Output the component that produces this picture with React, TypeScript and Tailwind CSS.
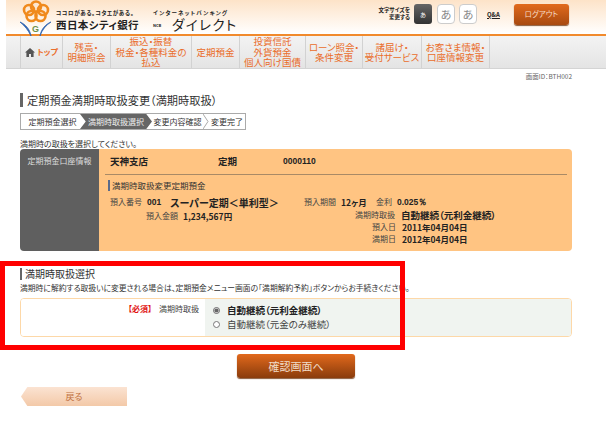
const navItems = [
  { w: 'w-[48px]', lines: ['残高・', '明細照会'] },
  { w: 'w-[81px]', lines: ['振込・振替', '税金・各種料金の', '払込'] },
  { w: 'w-[48px]', lines: ['定期預金'] },
  { w: 'w-[66px]', lines: ['投資信託', '外貨預金', '個人向け国債'] },
  { w: 'w-[57px]', lines: ['ローン照会・', '条件変更'] },
  { w: 'w-[59px]', lines: ['諸届け・', '受付サービス'] },
  { w: 'w-[68px]', lines: ['お客さま情報・', '口座情報変更'] },
];

function Logo() {
  return (
    <svg width="32" height="36" viewBox="0 0 32 36" className="shrink-0">
      <g fill="none" stroke="#f08a1d" strokeWidth="2.6">
        <circle cx="16" cy="6.5" r="5" />
        <circle cx="9" cy="10" r="5" />
        <circle cx="23" cy="10" r="5" />
        <circle cx="11.5" cy="16" r="5" />
        <circle cx="20.5" cy="16" r="5" />
      </g>
      <path d="M0 22 C5 24 10 29 11 36 C8 30 5 26 0 22Z" fill="#2f63b0" stroke="#2f63b0" strokeWidth="0.8" />
      <path d="M31 22 C26 24 21 29 20 36 C22 30 26 25 31 22Z" fill="#2f63b0" stroke="#2f63b0" strokeWidth="0.8" />
      <text x="12" y="32" fontSize="9" fontWeight="700" fill="#6f8f4a" fontFamily="Liberation Sans, sans-serif">G</text>
    </svg>
  );
}

function Field({ label, className, children }: { label: string; className: string; children: React.ReactNode }) {
  return (
    <div className={`flex items-center ${className}`}>
      <span className="text-[8px] font-normal text-[#444]">{label}</span>
      {children}
    </div>
  );
}

export default function App() {
  return (
    <div className="relative w-[606px] h-[425px] overflow-hidden bg-white text-[#222] font-['Noto_Sans_CJK_JP','Noto_Sans',sans-serif] [font-feature-settings:'palt']">
      {/* header */}
      <header className="ml-[6px] h-[34px] flex bg-gradient-to-b from-[#fde3c8] to-white">
        <div className="ml-[14px] flex items-start">
          <Logo />
          <div className="ml-[4px] pt-[10px] w-[88px]">
            <div className="text-[5.5px] leading-[6px] font-bold tracking-[0.6px] whitespace-nowrap">ココロがある。コタエがある。</div>
            <div className="text-[10.5px] leading-[13px] mt-[2px] font-bold tracking-[0.4px] whitespace-nowrap">西日本シティ銀行</div>
          </div>
          <div className="ml-[9px] pt-[10px] w-[90px]">
            <div className="text-[5.5px] leading-[6px] font-bold tracking-[1.2px] whitespace-nowrap">インターネットバンキング</div>
            <div className="flex items-center mt-[2px]">
              <span className="text-[4px] leading-[4px] w-[6px] font-bold">NCB</span>
              <span className="ml-[13px] text-[13.5px] leading-[13px] tracking-[1.4px] whitespace-nowrap">ダイレクト</span>
            </div>
          </div>
        </div>
        <div className="ml-[131px] flex items-center pb-[6px]">
          <div className="w-[36px] text-[5.5px] leading-[7px] text-right font-bold">文字サイズを<br />変更する</div>
          <div className="ml-[4px] w-[18px] h-[20px] rounded-[3px] bg-gradient-to-b from-[#666] to-[#333] text-white text-[6px] flex items-center justify-center">あ</div>
          <div className="ml-[5px] w-[18px] h-[20px] rounded-[4px] border border-[#ccc] bg-white text-[#888] text-[11px] flex items-center justify-center">あ</div>
          <div className="ml-[4px] w-[18px] h-[20px] rounded-[4px] border border-[#ccc] bg-white text-[#888] text-[11px] flex items-center justify-center">あ</div>
          <a className="ml-[10px] text-[6px] font-bold underline">Q&amp;A</a>
          <button className="ml-[14px] w-[55px] h-[21px] rounded-[3px] bg-gradient-to-b from-[#e26a1c] to-[#a84a10] text-[#f6dcc6] text-[7.5px] shadow-[0_1px_1px_#8a5a3a]">ログアウト</button>
        </div>
      </header>

      {/* nav */}
      <nav className="ml-[6px] h-[35px] flex border-t-2 border-[#f18a2c] border-b border-b-[#d4d4d4] bg-gradient-to-b from-[#f3f3f3] to-[#e4e4e4] text-[#ea6d2a] text-[9.5px] leading-[10.5px] text-center">
        <div className="w-[15px] border-r border-[#d2d2d2]"></div>
        <div className="w-[42px] border-r border-[#d2d2d2] flex items-center justify-center gap-[2px]">
          <svg width="10" height="9" viewBox="0 0 10 9" fill="#555"><path d="M5 0 L10 4.5 H8.6 V9 H6 V6 H4 V9 H1.4 V4.5 H0Z" /></svg>
          <span className="text-[8px] font-bold">トップ</span>
        </div>
        {navItems.map((item) => (
          <div key={item.lines[0]} className={`${item.w} shrink-0 border-r border-[#d2d2d2] flex flex-col items-center justify-center whitespace-nowrap`}>
            {item.lines.map((l) => <div key={l}>{l}</div>)}
          </div>
        ))}
      </nav>

      <div className="h-[10px] pr-[34px] text-right text-[6.5px] leading-[14px] text-[#666]">画面ID：BTH002</div>

      <main className="pl-[20px] pr-[34px]">
        <h1 className="mt-[14px] border-l-[3px] border-[#666] pl-[4px] text-[11.2px] leading-[14px] text-[#333]">定期預金満期時取扱変更（満期時取扱）</h1>

        {/* steps */}
        <div className="mt-[6px] w-[226px] h-[17px] border border-[#aaa] flex text-[8px] leading-[15px] text-[#333]">
          <div className="w-[59px] text-center pl-[4px]">定期預金選択</div>
          <div className="w-[72px] text-center text-[#eee] bg-[#666] [clip-path:polygon(0_0,92%_0,100%_50%,92%_100%,0_100%,8%_50%)]">満期時取扱選択</div>
          <div className="w-[51px] text-center">変更内容確認</div>
          <svg width="6" height="15" viewBox="0 0 6 15" fill="none" stroke="#aaa" className="shrink-0"><path d="M0 0 L5 7.5 L0 15" /></svg>
          <div className="flex-1 text-center">変更完了</div>
        </div>

        <p className="mt-[8px] text-[8px] leading-[11px] text-[#333]">満期時の取扱を選択してください。</p>

        {/* account card */}
        <section className="h-[102px] rounded-[4px] overflow-hidden flex">
          <div className="w-[79px] bg-[#5f5f5f] pt-[6px] text-center text-[8px] leading-[12px] text-[#ddd]">定期預金口座情報</div>
          <div className="flex-1 bg-[#ffc482] pl-[6px] pr-[5px]">
            <div className="h-[26px] border-b border-[#a98a66] pl-[5px] flex items-center text-[9.5px] font-bold">
              <span className="w-[108px]">天神支店</span>
              <span className="w-[65px]">定期</span>
              <span className="font-['Liberation_Sans'] text-[8.5px]">0000110</span>
            </div>
            <h2 className="mt-[5px] ml-[3px] border-l-2 border-[#5a6a8a] pl-[2px] text-[8.5px] leading-[11px] text-[#333]">満期時取扱変更定期預金</h2>
            <div className="mt-[4px] pl-[5px] flex items-center h-[14px] text-[8.5px] font-bold">
              <Field label="預入番号" className="w-[194px]">
                <span className="ml-[5px] font-['Liberation_Sans']">001</span>
                <span className="ml-[9px] text-[10px]">スーパー定期＜単利型＞</span>
              </Field>
              <Field label="預入期間" className="w-[72px]">
                <span className="ml-[5px]">12ヶ月</span>
              </Field>
              <Field label="金利" className="">
                <span className="ml-[5px] font-['Liberation_Sans']">0.025％</span>
              </Field>
            </div>
            <div className="flex text-[8.5px] font-bold">
              <Field label="預入金額" className="w-[250px] h-[14px] pl-[41px]">
                <span className="ml-[5px]">1,234,567円</span>
              </Field>
              <div className="flex flex-col">
                <Field label="満期時取扱" className="h-[12px]">
                  <span className="ml-[6px] text-[9.5px]">自動継続（元利金継続）</span>
                </Field>
                <Field label="預入日" className="h-[12px] pl-[17px]">
                  <span className="ml-[6px]">2011年04月04日</span>
                </Field>
                <Field label="満期日" className="h-[12px] pl-[17px]">
                  <span className="ml-[6px]">2012年04月04日</span>
                </Field>
              </div>
            </div>
          </div>
        </section>

        {/* selection */}
        <h2 className="mt-[17px] border-l-2 border-[#666] pl-[3px] text-[10px] leading-[12px] text-[#333]">満期時取扱選択</h2>
        <p className="mt-[2px] text-[7.8px] leading-[11px] text-[#333] whitespace-nowrap">満期時に解約する取扱いに変更される場合は、定期預金メニュー画面の「満期解約予約」ボタンからお手続きください。</p>
        <div className="mt-[5px] h-[39px] flex rounded-[4px] border border-[#fdd8a8] overflow-hidden">
          <div className="w-[184px] bg-white pt-[4px] pr-[6px] flex justify-end gap-[7px] text-[8px] leading-[12px]">
            <span className="text-[#e01010] font-bold">【必須】</span>
            <span className="text-[#444]">満期時取扱</span>
          </div>
          <div className="flex-1 bg-[#f0f4f0] pl-[8px] pt-[5px] flex flex-col gap-[2px] text-[9.5px] leading-[12px]">
            <label className="flex items-center gap-[7px] font-bold">
              <input type="radio" name="m" defaultChecked className="w-[7px] h-[7px] m-0 accent-[#666]" />
              自動継続（元利金継続）
            </label>
            <label className="flex items-center gap-[7px] text-[#444]">
              <input type="radio" name="m" className="w-[7px] h-[7px] m-0 accent-[#666]" />
              自動継続（元金のみ継続）
            </label>
          </div>
        </div>

        <button className="block mt-[17px] ml-[217px] w-[118px] h-[24px] rounded-[3px] bg-gradient-to-b from-[#e2691c] to-[#8a3c0c] text-[#f0dcc8] text-[11px] shadow-[0_1px_1px_#8a5a3a]">確認画面へ</button>

        <button className="block mt-[9px] ml-[1px] w-[106px] h-[19px] bg-gradient-to-b from-[#fbe3d2] to-[#f3c9a8] text-[#c07040] text-[9px] [clip-path:polygon(0_50%,6%_0,100%_0,100%_100%,6%_100%)]">戻る</button>
      </main>

      {/* annotation frame */}
      <div className="absolute left-0 top-[261px] w-[405px] h-[89px] border-[5px] border-[#ff0000] pointer-events-none"></div>
    </div>
  );
}
